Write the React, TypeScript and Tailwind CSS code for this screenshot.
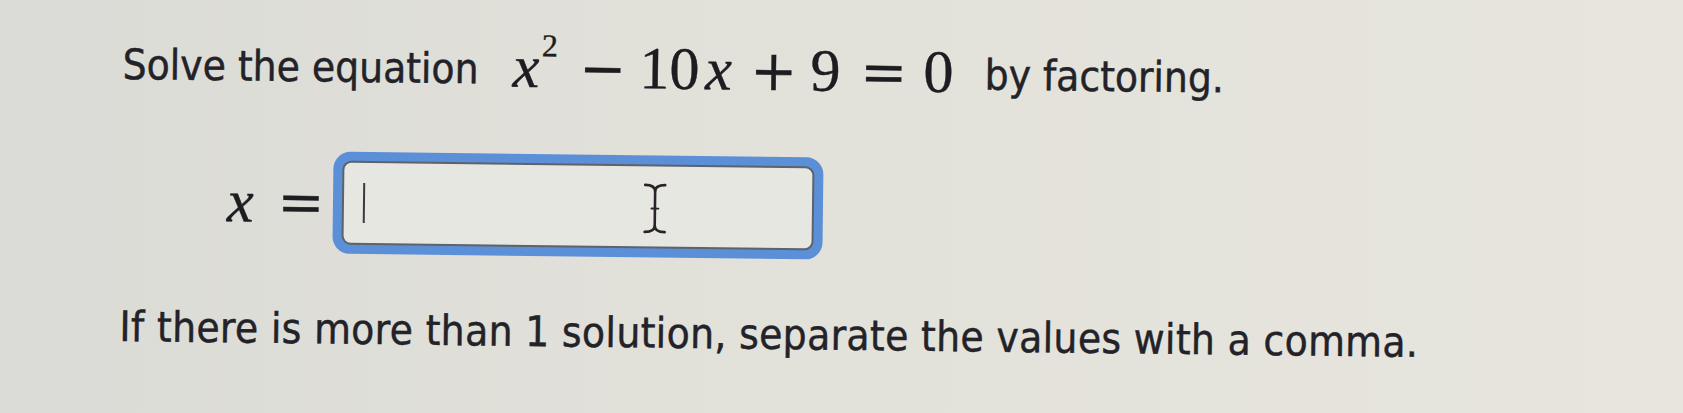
import React from "react";

const sans = "font-['DejaVu_Sans_Condensed','Open_Sans',sans-serif]";
const serif = "font-['Liberation_Serif','Times_New_Roman',serif]";
const op = "font-['DejaVu_Serif','Liberation_Serif',serif]";

function Equation() {
  return (
    <span className={`${serif} relative top-[3px] inline-flex items-baseline text-[60px] leading-none text-[#1c1c21] [-webkit-text-stroke:0.4px_#1c1c21]`}>
      <span className="w-[29px] italic">x</span>
      <span className="relative -top-[31px] w-[24px] text-[32px]">2</span>
      <span className={`${op} w-[74px] text-center text-[56px]`}>−</span>
      <span className="w-[58px] text-center">10</span>
      <span className="w-[42px] text-center italic">x</span>
      <span className={`${op} w-[68px] text-center text-[56px]`}>+</span>
      <span className="w-[36px] text-center">9</span>
      <span className={`${op} w-[80px] text-center text-[56px]`}>=</span>
      <span className="w-[30px] text-center">0</span>
    </span>
  );
}

// mouse pointer sitting over the answer field
function IBeam() {
  return (
    <svg width="26" height="52" viewBox="0 0 26 52" className="absolute left-[309px] top-[27px]">
      <g fill="none" stroke="#2b2129" strokeWidth="2.6" strokeLinecap="round">
        <path d="M3 2.5 Q13 2.5 13 9 Q13 2.5 23 2.5" />
        <path d="M13 9 L13 43" />
        <path d="M9.5 26 L16.5 26" strokeWidth="1.8" />
        <path d="M3 49.5 Q13 49.5 13 43 Q13 49.5 23 49.5" />
      </g>
    </svg>
  );
}

export default function App() {
  return (
    <div className="w-[1683px] h-[413px] overflow-hidden bg-gradient-to-r from-[#dbdbd7] via-[#e3e2da] to-[#e7e5de]">
      <div className={`${sans} rotate-[0.7deg] origin-[121px_200px] text-[#222228] [-webkit-text-stroke:0.45px_#222228] pl-[121px] pt-[29px]`}>
        <p className="flex items-baseline h-[60px] leading-[60px] text-[42px] whitespace-nowrap">
          <span>Solve the equation</span>
          <span className="ml-[34px]">
            <Equation />
          </span>
          <span className="ml-[31px]">by factoring.</span>
        </p>

        <div className="flex items-center mt-[60px] pl-[106px]">
          <span className={`${serif} w-[50px] italic text-[60px] leading-none text-[#1c1c21]`}>x</span>
          <span className={`${op} w-[48px] text-center text-[56px] leading-none text-[#1c1c21]`}>=</span>
          <div className="relative ml-[8px] w-[490px] h-[102px] rounded-[17px] bg-[#5b8fd7] p-[9px]">
            <div className="h-full w-full rounded-[9px] border-2 border-[#5d626b] bg-[#e7e7e1] flex items-center pl-[19px]">
              <span className="block w-[2px] h-[40px] bg-[#3a3a40]" />
            </div>
            <IBeam />
          </div>
        </div>

        <p className="mt-[46px] h-[60px] leading-[60px] text-[42px] tracking-[0.35px] whitespace-nowrap">
          If there is more than 1 solution, separate the values with a comma.
        </p>
      </div>
    </div>
  );
}
